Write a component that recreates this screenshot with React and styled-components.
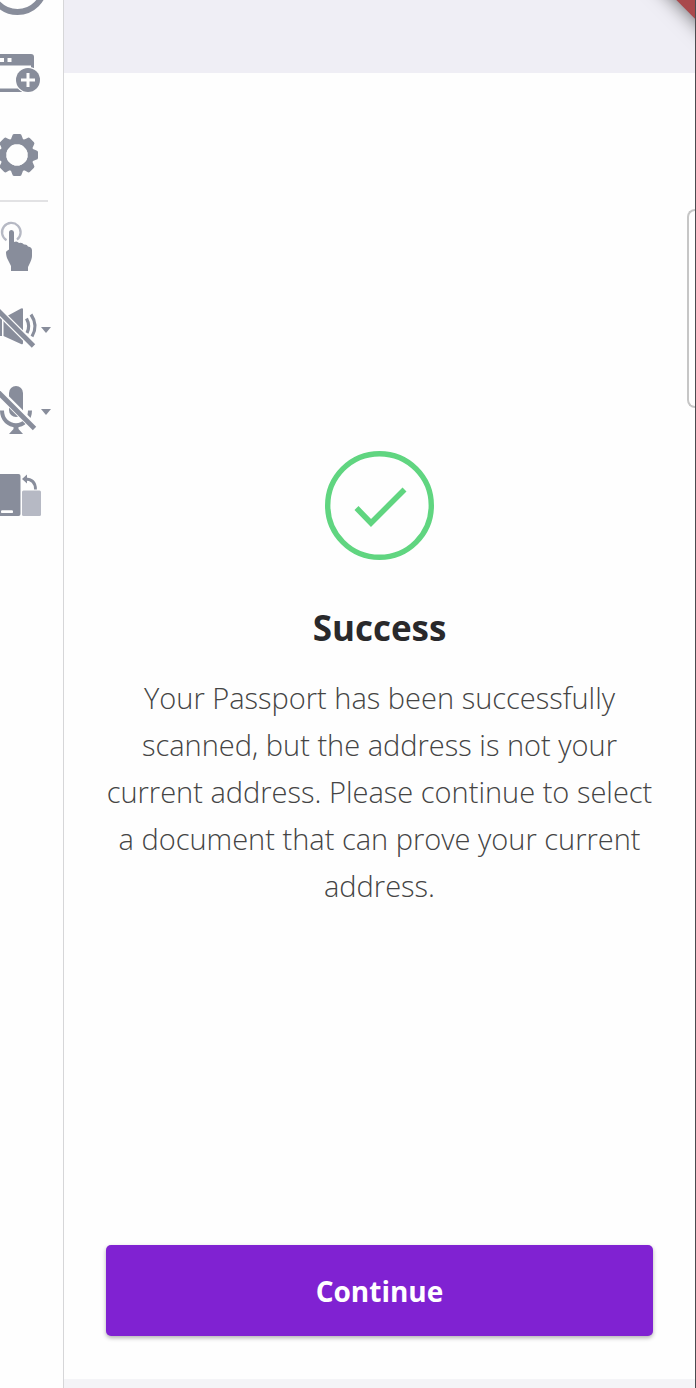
import React from "react";
import styled, { createGlobalStyle } from "styled-components";

const INK = "#888d9b";
const PALE = "#b6b9c4";

const GlobalStyle = createGlobalStyle`
  *, *::before, *::after { box-sizing: border-box; }
  body {
    margin: 0;
    background: #fefefe;
    font-family: "Open Sans", "Noto Sans", sans-serif;
  }
`;

const Page = styled.div`
  display: flex;
  min-height: 100vh;
  overflow: hidden;
`;

const Sidebar = styled.nav`
  flex: none;
  display: flex;
  flex-direction: column;
  width: 64px;
  border-right: 1px solid #d6d6d8;
  background: #fefefe;
`;

const ToolButton = styled.button`
  display: block;
  width: 100%;
  height: ${(p) => (p.$short ? "32px" : "82px")};
  padding: 0;
  border: 0;
  background: none;
  cursor: pointer;

  svg {
    display: block;
    width: 63px;
    height: 100%;
  }
`;

const Divider = styled.hr`
  width: 48px;
  height: 2px;
  margin: 4px 0;
  border: 0;
  background: #e2e2e4;
`;

const Device = styled.div`
  position: relative;
  flex: 1;
  display: flex;
  flex-direction: column;
  min-width: 0;
  overflow: hidden;
  border-right: 1px solid #4b4b4f;
`;

const StatusArea = styled.header`
  flex: none;
  height: 73px;
  background: #efeef5;
`;

const Ribbon = styled.div`
  position: absolute;
  top: -29px;
  right: -51px;
  width: 120px;
  height: 32px;
  background: #a9494c;
  box-shadow: 0 0 20px rgba(0, 0, 0, 0.6);
  transform: rotate(45deg);
`;

const SideHandle = styled.div`
  position: absolute;
  top: 209px;
  right: 0;
  width: 8px;
  height: 199px;
  border: 2px solid #c6c6c6;
  border-right: 0;
  border-radius: 8px 0 0 8px;
`;

const Screen = styled.main`
  flex: 1;
  display: flex;
  flex-direction: column;
  padding: 42px 42px 43px;
  background: #fefefe;
`;

const Message = styled.section`
  flex: 1;
  display: flex;
  flex-direction: column;
  align-items: center;
  justify-content: center;
  text-align: center;
`;

const SuccessMark = styled.svg`
  width: 109px;
  height: 109px;
  margin-bottom: 44px;
`;

const Title = styled.h1`
  margin: 0 0 22px;
  font-size: 35px;
  font-weight: 700;
  line-height: 48px;
  color: #29292b;
`;

const Description = styled.p`
  margin: 0;
  font-size: 29px;
  font-weight: 300;
  line-height: 47px;
  color: #444444;
`;

const PrimaryButton = styled.button`
  flex: none;
  height: 91px;
  border: 0;
  border-radius: 5px;
  background: #8022d2;
  box-shadow: 0 2px 4px rgba(0, 0, 0, 0.3);
  color: #fff;
  font-family: inherit;
  font-size: 28px;
  font-weight: 700;
  cursor: pointer;
`;

const BottomStrip = styled.footer`
  flex: none;
  height: 9px;
  background: #f4f4f7;
`;

const Caret = () => <path d="M41 39h10l-5 6z" fill={INK} />;

const PowerIcon = () => (
  <svg viewBox="0 0 63 32" aria-hidden="true">
    <circle cx="17.5" cy="-15" r="27" fill="none" stroke={INK} strokeWidth="6" />
  </svg>
);

const NewWindowIcon = () => (
  <svg viewBox="0 0 63 82" aria-hidden="true">
    <path d="M-12 22H31a3 3 0 0 1 3 3V36H-12z" fill={INK} />
    <path d="M-12 33.500H31V57H-12z" fill="#fefefe" />
    <path d="M-12 56.500H22V60H-12z" fill={INK} />
    <path d="M0 26h4v4H0zM7.500 26h4v4h-4z" fill="#fefefe" />
    <circle cx="28" cy="48" r="13.200" fill="#fefefe" />
    <circle cx="28" cy="48" r="12" fill={INK} />
    <path d="M28 41v14M21 48h14" stroke="#fefefe" strokeWidth="3" />
  </svg>
);

const GearIcon = () => (
  <svg viewBox="0 0 63 82" aria-hidden="true">
    <g transform="translate(17 41)" fill={INK}>
      {[0, 45, 90, 135, 180, 225, 270, 315].map((angle) => (
        <path
          key={angle}
          d="M-8 -14Q-5.500 -15.500 -4.800 -19Q-4.400 -21 -3 -21H3Q4.400 -21 4.800 -19Q5.500 -15.500 8 -14L0 -10z"
          transform={`rotate(${angle})`}
        />
      ))}
      <circle r="13.500" fill="none" stroke={INK} strokeWidth="5.600" />
      <circle r="10.700" fill="#fefefe" />
    </g>
  </svg>
);

const TouchIcon = () => (
  <svg viewBox="0 0 63 82" aria-hidden="true">
    <path d="M6.500 34.200A9.300 9.300 0 1 1 17 33.600" fill="none" stroke={PALE} strokeWidth="2.300" />
    <path
      d="M9 26.500a2.500 2.500 0 0 1 5 0V36q3-1.500 5 1 3-1 5 1.500 3-.5 4 2 4 .5 4 4V50q0 3-3 9l-1 2v4H11v-5L7 52q-1-3-1-6 0-1 3-2.500z"
      fill={INK}
    />
  </svg>
);

const SpeakerOffIcon = () => (
  <svg viewBox="0 0 63 82" aria-hidden="true">
    <path d="M-8 29H2V48H-8zM3.500 30L21 20.500q2-1 2 1V55q0 2-2 1L3.500 48z" fill={INK} />
    <path d="M26.500 30.500q4 7.500 .5 14.500M31 26.500q7.500 11 1 22" fill="none" stroke={INK} strokeWidth="3.200" />
    <path d="M-5 19.500L36 60.500" stroke="#fefefe" strokeWidth="7.400" />
    <path d="M-5 19.500L33.500 58" stroke={INK} strokeWidth="4.800" />
    <Caret />
  </svg>
);

const MicOffIcon = () => (
  <svg viewBox="0 0 63 82" aria-hidden="true">
    <rect x="9" y="16" width="14" height="31" rx="7" fill={INK} />
    <path d="M2 40.500C2 60 30 60 30 40.500" fill="none" stroke={INK} strokeWidth="4" />
    <path d="M-4 19L37 60" stroke="#fefefe" strokeWidth="8" />
    <path d="M-4 20L34.500 58.500" stroke={INK} strokeWidth="4.800" />
    <path d="M13.500 55h5v4l4.500 5H9l4.500-5z" fill={INK} />
    <Caret />
  </svg>
);

const RotateIcon = () => (
  <svg viewBox="0 0 63 82" aria-hidden="true">
    <rect x="-6" y="22" width="26.500" height="42" rx="2" fill={INK} />
    <rect x="1" y="58.300" width="12" height="2.800" rx="1.200" fill="#fefefe" />
    <rect x="22" y="38.500" width="19" height="25.500" rx="1.500" fill={PALE} />
    <path d="M25 27Q35.500 27 35.500 37.500" fill="none" stroke={INK} strokeWidth="2.800" />
    <path d="M22 27L27 22.500V31.500z" fill={INK} />
  </svg>
);

export default function App() {
  return (
    <>
      <GlobalStyle />
      <Page>
        <Sidebar aria-label="Device tools">
          <ToolButton $short aria-label="Power"><PowerIcon /></ToolButton>
          <ToolButton aria-label="New window"><NewWindowIcon /></ToolButton>
          <ToolButton aria-label="Settings"><GearIcon /></ToolButton>
          <Divider />
          <ToolButton aria-label="Touch"><TouchIcon /></ToolButton>
          <ToolButton aria-label="Sound off"><SpeakerOffIcon /></ToolButton>
          <ToolButton aria-label="Microphone off"><MicOffIcon /></ToolButton>
          <ToolButton aria-label="Rotate device"><RotateIcon /></ToolButton>
        </Sidebar>
        <Device>
          <StatusArea />
          <Screen>
            <Message>
              <SuccessMark viewBox="0 0 109 109" aria-hidden="true">
                <circle cx="54.500" cy="54.500" r="51.800" fill="none" stroke="#60d580" strokeWidth="5.400" />
                <path d="M31.500 57L46 72L79.500 38.500" fill="none" stroke="#60d580" strokeWidth="5.600" />
              </SuccessMark>
              <Title>Success</Title>
              <Description>
                Your Passport has been successfully scanned, but the address is not your current
                address. Please continue to select a document that can prove your current address.
              </Description>
            </Message>
            <PrimaryButton type="button">Continue</PrimaryButton>
          </Screen>
          <BottomStrip />
          <Ribbon />
          <SideHandle />
        </Device>
      </Page>
    </>
  );
}
